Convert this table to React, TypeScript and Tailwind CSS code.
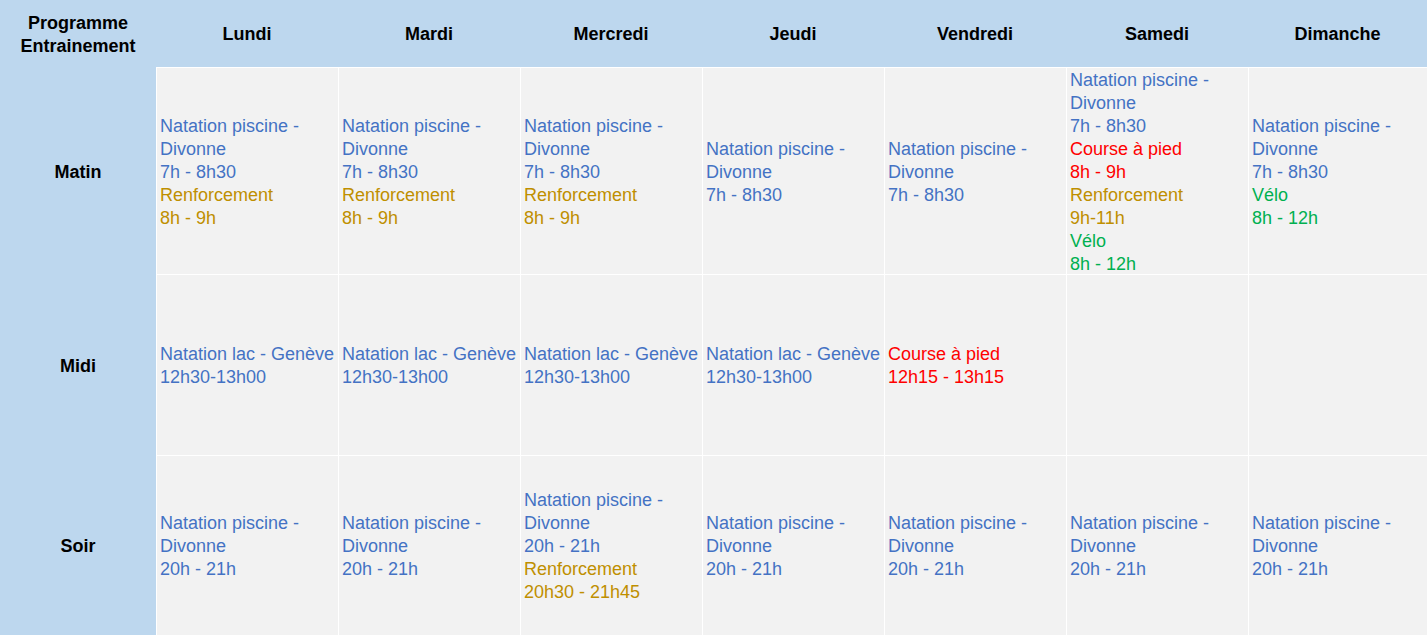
type Entry = { text: string; color: 'blue' | 'gold' | 'red' | 'green' };

const COLORS: Record<Entry['color'], string> = {
  blue: 'text-[#4472C4]',
  gold: 'text-[#BF8F00]',
  red: 'text-[#FF0000]',
  green: 'text-[#00B050]',
};

const DAYS = ['Lundi', 'Mardi', 'Mercredi', 'Jeudi', 'Vendredi', 'Samedi', 'Dimanche'];

const piscine = (time: string): Entry[] => [
  { text: 'Natation piscine - Divonne', color: 'blue' },
  { text: time, color: 'blue' },
];
const lac: Entry[] = [
  { text: 'Natation lac - Genève', color: 'blue' },
  { text: '12h30-13h00', color: 'blue' },
];
const renfo = (time: string): Entry[] => [
  { text: 'Renforcement', color: 'gold' },
  { text: time, color: 'gold' },
];

const ROWS: { label: string; height: string; cells: Entry[][] }[] = [
  {
    label: 'Matin',
    height: 'h-[206px]',
    cells: [
      [...piscine('7h - 8h30'), ...renfo('8h - 9h')],
      [...piscine('7h - 8h30'), ...renfo('8h - 9h')],
      [...piscine('7h - 8h30'), ...renfo('8h - 9h')],
      piscine('7h - 8h30'),
      piscine('7h - 8h30'),
      [
        ...piscine('7h - 8h30'),
        { text: 'Course à pied', color: 'red' },
        { text: '8h - 9h', color: 'red' },
        ...renfo('9h-11h'),
        { text: 'Vélo', color: 'green' },
        { text: '8h - 12h', color: 'green' },
      ],
      [
        ...piscine('7h - 8h30'),
        { text: 'Vélo', color: 'green' },
        { text: '8h - 12h', color: 'green' },
      ],
    ],
  },
  {
    label: 'Midi',
    height: 'h-[180px]',
    cells: [
      lac,
      lac,
      lac,
      lac,
      [
        { text: 'Course à pied', color: 'red' },
        { text: '12h15 - 13h15', color: 'red' },
      ],
      [],
      [],
    ],
  },
  {
    label: 'Soir',
    height: 'h-[179px]',
    cells: [
      piscine('20h - 21h'),
      piscine('20h - 21h'),
      [...piscine('20h - 21h'), ...renfo('20h30 - 21h45')],
      piscine('20h - 21h'),
      piscine('20h - 21h'),
      piscine('20h - 21h'),
      piscine('20h - 21h'),
    ],
  },
];

export default function App() {
  return (
    <div className="w-[1427px] h-[635px] overflow-hidden bg-[#BDD7EE] font-['Liberation_Sans',Arial,sans-serif] text-[18px] leading-[23px]">
      {/* Header */}
      <div className="flex h-[67px] pt-[2px] items-center font-bold text-black">
        <div className="w-[156px] text-center">
          Programme
          <br />
          Entrainement
        </div>
        {DAYS.map((day) => (
          <div key={day} className="w-[182px] text-center last:w-[179px]">
            {day}
          </div>
        ))}
      </div>

      <div className="flex">
        {/* Row labels */}
        <div className="w-[156px] flex flex-col pt-px">
          {ROWS.map((row, i) => (
            <div
              key={row.label}
              className={`${row.height} pt-[2px] flex items-center justify-center font-bold text-black ${i > 0 ? 'mt-px' : ''}`}
            >
              {row.label}
            </div>
          ))}
        </div>

        {/* Cells */}
        <div className="flex-1 grid grid-cols-[181px_181px_181px_181px_181px_181px_178px] gap-px bg-white border-l border-t border-white">
          {ROWS.map((row) =>
            row.cells.map((cell, ci) => (
              <div
                key={`${row.label}-${ci}`}
                className={`${row.height} bg-[#F2F2F2] pl-[3px] pt-[2px] flex flex-col justify-center`}
              >
                {cell.map((e, ei) => (
                  <div key={ei} className={COLORS[e.color]}>
                    {e.text}
                  </div>
                ))}
              </div>
            ))
          )}
        </div>
      </div>
    </div>
  );
}
